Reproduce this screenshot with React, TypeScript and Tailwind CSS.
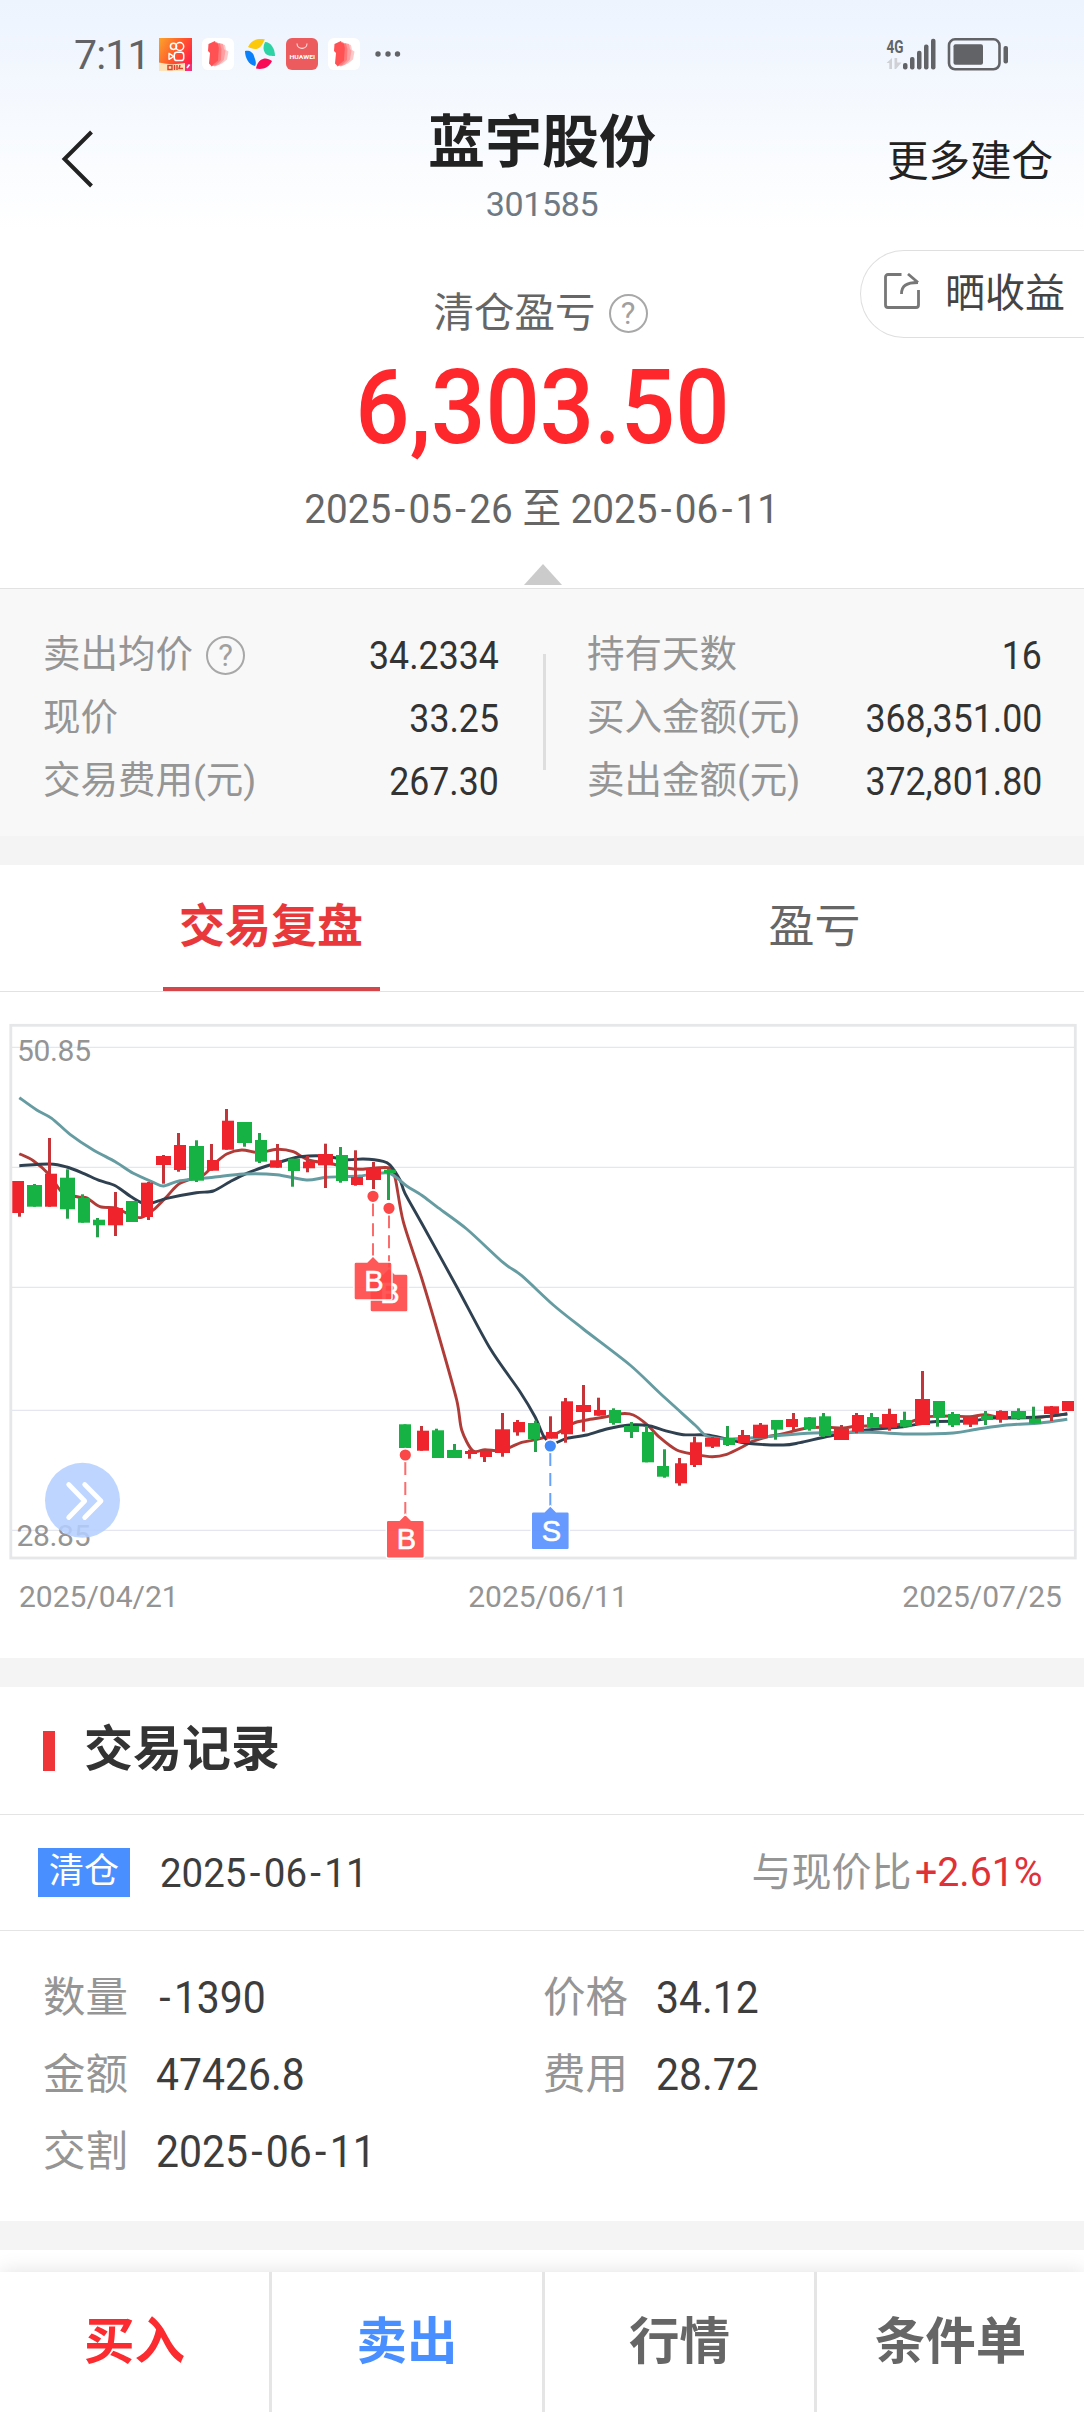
import { Fragment, JSX, ReactNode } from 'react'

type Point = [number, number]

// bodyX, bodyWidth, bodyTop, bodyBottom, wickX, high, low, rising (1) / falling (0)
type Candle = [number, number, number, number, number, number, number, 0 | 1]

const candles: Candle[] = [
  [12.3, 11.7, 181, 213, 19.5, 181, 216.7, 1],
  [27, 15, 185, 206.7, 34.5, 184, 206.7, 0],
  [45, 12, 173.7, 206.7, 49.5, 138, 206.7, 1],
  [60, 15, 177.7, 209.3, 67.5, 169.3, 218.7, 0],
  [78, 12, 198, 222.7, 82.5, 194.3, 222.7, 0],
  [93, 12, 219.7, 225.3, 97.5, 218, 237.3, 0],
  [108, 15, 208, 225.3, 115.5, 192, 236, 1],
  [126, 12, 201, 222, 130.5, 201, 222, 0],
  [141, 12, 182.7, 217, 148.5, 182, 220, 1],
  [156, 15, 156, 165, 163.5, 155, 183.7, 1],
  [174, 12, 145, 170, 178.5, 133, 171.7, 1],
  [189, 15, 146, 180.7, 196.5, 140.3, 182, 0],
  [207, 12, 160, 170.7, 211.5, 144, 170.7, 1],
  [222, 12, 120.7, 149.7, 226.5, 109, 149.7, 1],
  [237, 15, 122, 143, 244.5, 122, 146.7, 0],
  [255, 12, 140, 161.7, 259.5, 133, 163, 0],
  [270, 12, 160.3, 167.7, 277.5, 144, 167.7, 1],
  [288, 12, 158.7, 171, 292.5, 158.7, 186.7, 0],
  [303, 12, 161.7, 168.3, 307.5, 156, 172.3, 1],
  [318, 15, 154, 165.3, 325.5, 143.7, 188, 1],
  [336, 12, 155, 181, 340.5, 147, 182.7, 0],
  [351, 12, 177, 185, 355.5, 150.3, 185.7, 1],
  [366, 15, 168.3, 180, 373.5, 162, 189, 1],
  [384, 12, 169.7, 173, 388.5, 169, 200, 0],
  [399, 12, 424.3, 448, 405, 424.3, 448, 0],
  [417, 12, 430.7, 450.7, 421.5, 426, 450.7, 1],
  [432, 12, 430.3, 458, 436.5, 428.7, 458, 0],
  [447, 15, 450, 458, 454.5, 444, 458, 0],
  [465, 12, 451, 454, 469.5, 449.7, 458.7, 1],
  [480, 12, 451, 457, 484.5, 451, 462, 1],
  [495, 15, 429.3, 453, 502.5, 413, 456.7, 1],
  [513, 12, 422, 432.3, 517.5, 420, 435.7, 1],
  [528, 12, 423, 439, 535.5, 420.7, 452, 0],
  [546, 12, 432, 438.7, 550.5, 416.3, 438.7, 1],
  [561, 12, 401.3, 434.3, 565.5, 398, 442.7, 1],
  [576, 15, 405, 412, 583.5, 385, 431.7, 1],
  [594, 12, 410, 415.7, 598.5, 397.7, 415.7, 1],
  [609, 12, 410, 423, 613.5, 408.3, 424.7, 0],
  [624, 15, 426, 432, 631.5, 422, 438, 0],
  [642, 12, 432, 462.3, 646.5, 426, 462.3, 0],
  [657, 12, 466, 476.7, 664.5, 449.3, 477.7, 0],
  [675, 12, 463.3, 483.3, 679.5, 458, 485.7, 1],
  [690, 12, 442.3, 465, 694.5, 436.7, 467, 1],
  [705, 15, 437.7, 446.7, 712.5, 437, 448, 1],
  [723, 12, 438, 445, 727.5, 426, 446, 0],
  [738, 12, 435, 443, 742.5, 430, 443, 1],
  [753, 15, 424.7, 438, 760.5, 423, 438, 1],
  [771, 12, 420, 429.7, 775.5, 420, 439.7, 0],
  [786, 12, 419, 427, 793.5, 413, 430, 1],
  [804, 12, 417.3, 429, 809.5, 417, 430.7, 0],
  [819, 12, 416.3, 436, 823.5, 413, 437, 0],
  [834, 15, 429, 440, 841.5, 425, 440, 1],
  [852, 12, 415, 431.7, 856.5, 413, 433.3, 1],
  [867, 12, 417, 427.7, 871.5, 413, 427.7, 0],
  [882, 15, 414, 427.7, 889.5, 408.7, 430.7, 1],
  [900, 12, 420, 426.7, 904.5, 411.7, 427.7, 0],
  [915, 15, 399, 425, 922.5, 371, 425, 1],
  [933, 12, 401, 417.7, 937.5, 401, 426.7, 0],
  [948, 12, 414, 425.3, 952.5, 412, 427, 0],
  [963, 15, 417, 424.7, 970.5, 417, 427, 1],
  [981, 12, 415.7, 420, 985.5, 411, 425, 0],
  [996, 12, 411, 419.7, 1000.5, 410.3, 422.7, 1],
  [1011, 15, 411, 418.7, 1018.5, 408.3, 420, 0],
  [1029, 12, 418.7, 423.7, 1033.5, 406.7, 423.7, 0],
  [1044, 15, 406.3, 414, 1051.5, 406, 421, 1],
  [1062, 12, 401, 411, 1068, 401, 411, 1],
]

const ma5: Point[] = [
  [19.3, 153.7], [33.3, 160.7], [49.7, 175], [61.7, 191.7], [78.3, 197], [86.7, 197.7], [100, 206.7],
  [116.7, 208.3], [132, 216], [141.7, 217.3], [153.3, 210], [166.7, 196.7], [180, 183.3], [203.3, 175],
  [215, 163.3], [226.7, 154], [241.7, 150], [259.7, 152.7], [276.7, 149.3], [293.3, 151.7], [308.3, 160],
  [333, 164], [348, 168.3], [361.7, 169.3], [388.3, 167.7], [395, 177.3], [403.3, 221.7], [421.7, 278.3],
  [440, 340], [456.7, 400], [461.7, 430], [472.7, 450.7], [485, 449.7], [500, 450.7], [510, 447.3],
  [521.7, 442.3], [535.3, 439.7], [556.7, 433.3], [573.3, 423.3], [586.7, 420], [603.3, 417.3],
  [621.7, 413.7], [633.3, 415], [646.7, 424.3], [660, 437.7], [676.7, 450], [694.7, 454.3], [712.3, 456.7],
  [726.7, 454.3], [742.7, 446.7], [751.7, 441.7], [766.7, 437], [783.3, 433.7], [806.7, 428], [826.7, 427.3],
  [843.3, 428], [856.7, 426], [873.3, 426], [903.3, 424], [923.3, 417.3], [936.7, 416.3], [953.3, 416],
  [970, 416.7], [985, 414.7], [1003.3, 417.7], [1040, 417.3], [1067.3, 414],
]

const ma10: Point[] = [
  [19.3, 165.7], [50, 164], [66.7, 167], [83.3, 173.3], [100, 180.7], [115.3, 185.7], [132, 197.3],
  [146.7, 204], [166.7, 198.3], [196.3, 192.7], [213.3, 191], [230, 181.7], [246.7, 173.3], [266.7, 166],
  [286.7, 160], [300, 156.7], [323.3, 156], [346.7, 159.7], [363.3, 159], [383.3, 161.3], [390, 165],
  [400, 180], [405, 193.3], [421.7, 223.3], [456.7, 286.7], [490, 348.3], [520, 391.7], [535, 416.7],
  [544, 436.7], [553.3, 443.3], [566.7, 438.3], [586.7, 435], [606.7, 429], [630, 425], [650, 426],
  [665, 430.7], [683.3, 434.7], [706.7, 435], [727.7, 439.3], [746.7, 443.3], [783.3, 445], [800, 442.7],
  [830, 436], [866.7, 430], [903.3, 426.7], [933.3, 421.7], [970, 421], [993.3, 418], [1040, 417],
  [1067.3, 413.7],
]

const ma20: Point[] = [
  [19.3, 97.7], [36.7, 110], [51.7, 118.3], [70, 134.3], [93.3, 150], [115.3, 161.7], [133.3, 173.3],
  [153.3, 182.3], [163.7, 186], [180, 180.7], [213.3, 177.3], [243.3, 174], [276.7, 174.7], [306.7, 180],
  [326.7, 177.3], [360, 176], [388.3, 173], [406.7, 186], [421.7, 195.3], [436.7, 206.7], [466.7, 229],
  [503.3, 262.7], [521.7, 275.7], [553.3, 305], [583.3, 329], [630, 365], [660, 393.3], [695, 425],
  [706.7, 436], [726.7, 439], [750, 438], [773.3, 436], [813.3, 433], [870, 432.3], [906.7, 434],
  [953.3, 433], [976.7, 429.3], [1006.7, 425], [1040, 423], [1067.3, 419.3],
]

const gridLines = [47.3, 167.3, 287.3, 410.3, 530.3]

// Catmull-Rom through the points, softened a little
function smooth(points: Point[]): string {
  let d = `M${points[0][0]} ${points[0][1]}`
  for (let i = 0; i < points.length - 1; i++) {
    const p0 = points[i - 1] ?? points[i]
    const p1 = points[i]
    const p2 = points[i + 1]
    const p3 = points[i + 2] ?? p2
    d += ` C${p1[0] + (p2[0] - p0[0]) / 7} ${p1[1] + (p2[1] - p0[1]) / 7} ${p2[0] - (p3[0] - p1[0]) / 7} ${p2[1] - (p3[1] - p1[1]) / 7} ${p2[0]} ${p2[1]}`
  }
  return d
}

interface MarkerProps {
  x: number
  y: number
  badgeTop: number
  label: 'B' | 'S'
}

function Marker({ x, y, badgeTop, label }: MarkerProps) {
  const fill = label === 'B' ? '#ff4646' : '#568fff'
  const dot = label === 'B' ? '#fb4747' : '#4289fa'
  return (
    <g>
      <line x1={x} y1={y + 7} x2={x} y2={badgeTop - 4} stroke={dot} strokeOpacity={0.8} strokeWidth={2} strokeDasharray="13 7" />
      <circle cx={x} cy={y} r={6.4} fill={dot} stroke="#fff" strokeWidth={1.6} />
      <path
        d={`M${x - 17} ${badgeTop}h11l6 -6l6 6h11q2 0 2 2v34q0 2 -2 2h-34q-2 0 -2 -2v-34q0 -2 2 -2z`}
        fill={fill}
        fillOpacity={0.9}
        stroke="#fff"
        strokeWidth={1.4}
      />
      <text x={x + 1} y={badgeTop + 29} textAnchor="middle" fontSize={29} fill="#fff" stroke="#fff" strokeWidth={0.6} className="font-['Liberation_Sans',sans-serif]">
        {label}
      </text>
    </g>
  )
}

function KLineChart() {
  return (
    <svg className="block w-full h-[544px]" viewBox="0 20 1084 544" fill="none">
      {gridLines.map(y => (
        <line key={y} x1={12} x2={1074} y1={y} y2={y} stroke="#e4e7ef" strokeWidth={1.3} />
      ))}
      <rect x={10.8} y={25.3} width={1064.5} height={532.7} stroke="#e6e7e9" strokeWidth={2.8} />
      <path d={smooth(ma5)} stroke="#b03c38" strokeWidth={2.9} />
      <path d={smooth(ma10)} stroke="#2f4150" strokeWidth={2.9} />
      <path d={smooth(ma20)} stroke="#659ca2" strokeWidth={2.9} />
      {candles.map(([x, w, top, bottom, wick, high, low, up]) => (
        <g key={x}>
          <rect x={wick - 1.5} y={high} width={3} height={low - high} fill={up ? '#c4353a' : '#27a04b'} />
          <rect x={x} y={top} width={w} height={bottom - top} fill={up ? '#ee232b' : '#17b244'} />
        </g>
      ))}
      <g fontSize={30} fill="#949494">
        <text x={17} y={60.7} textLength={74}>50.85</text>
        <text x={16.5} y={545.7} textLength={74}>28.85</text>
      </g>
      <Marker x={389} y={208.3} badgeTop={274} label="B" />
      <Marker x={373} y={196.3} badgeTop={262} label="B" />
      <Marker x={405.3} y={455} badgeTop={520.3} label="B" />
      <Marker x={550.3} y={446} badgeTop={511.7} label="S" />
      <circle cx={82.5} cy={500.3} r={37.5} fill="#b3cfff" fillOpacity={0.87} />
      <path d="M68.7 484.5L84.7 501L68.7 517.5M84.7 484.5L101 501L84.7 517.5" stroke="#fff" strokeWidth={4.8} strokeLinecap="round" strokeLinejoin="round" />
    </svg>
  )
}

function CardsIcon() {
  return (
    <svg className="w-8 h-8" viewBox="0 0 32 32">
      <rect width={32} height={32} rx={6} fill="#fff" />
      <path d="M19 6l4 1 1 5 2.500 1.500-1.500 8-5 4-7 3z" fill="#ffc9ca" />
      <path d="M17 5l4 1 1 5 1.500 1.500-1.500 9-5 5-5 2z" fill="#ff9fa1" />
      <path d="M14 4l4 2 1.500 5-.5 11-5 5-5 1.500z" fill="#ff797b" />
      <path d="M6.500 6L13 3l1 2 2 1 .8 4-.8 12.500L9.500 28 7 25.500 8 15 6 13z" fill="#ff5054" />
    </svg>
  )
}

function StatusBar() {
  return (
    <div className="h-[108px] pl-[74px] pr-[75px] flex items-center text-[#626367]">
      <span className="w-[85px] pt-[2px] text-[41px] leading-none tracking-[-0.8px]">7:11</span>
      <div className="flex items-center gap-[10px]">
        <svg className="w-[33px] h-[33px]" viewBox="0 0 33 33" fill="none">
          <defs>
            <linearGradient id="kuai" x1="0" y1="0" x2="1" y2="0.6">
              <stop offset="0" stopColor="#fba52c" />
              <stop offset="0.55" stopColor="#ff5a2a" />
              <stop offset="1" stopColor="#ff2348" />
            </linearGradient>
          </defs>
          <rect width={33} height={33} fill="url(#kuai)" />
          <circle cx={14.5} cy={8.3} r={3.1} stroke="#fff" strokeWidth={1.5} />
          <circle cx={20.8} cy={8.5} r={3.9} stroke="#fff" strokeWidth={1.5} />
          <rect x={15.3} y={14.3} width={9.4} height={8.2} rx={2.6} stroke="#fff" strokeWidth={1.5} />
          <path d="M14.800 18.300L10 15.300v6z" stroke="#fff" strokeWidth={1.4} strokeLinejoin="round" />
          <path d="M0 24.500q13 3 26 0.500v8H0z" fill="#ffe3b8" />
          <path d="M9 27.500h4v4H9zM15.500 27v5M18 27v5M21 27l-1 3.500h4" stroke="#e0412c" strokeWidth={1.5} />
          <path d="M26 26h7v7h-7z" fill="#f4307a" />
          <path d="M30.500 26.500L28 30" stroke="#fff" strokeWidth={1.6} />
        </svg>
        <CardsIcon />
        <svg className="w-8 h-8" viewBox="0 0 32 32">
          <path d="M4 9C7 2 14 0 21 1.500C19 4 18 9 14 10.500C10 12 7 10 4 9z" fill="#fdc90d" />
          <path d="M21 4C27 4 31 11 31 18C28 18 23 18 21 15C19 12 19 8 21 4z" fill="#2dd3a5" />
          <path d="M28 23C25 30 18 32 12 30.500C13 26 15 22 19 21C22 20 25 21 28 23z" fill="#f80a56" />
          <path d="M1 13C5 12 9 14 10 18C11 21 13 25 11 28C5 27 1 20 1 13z" fill="#0a80fb" />
        </svg>
        <svg className="w-8 h-8" viewBox="0 0 32 32" fill="none">
          <rect width={32} height={32} rx={6} fill="#ec5c5e" />
          <path d="M11 5.500c0 6.500 10 6.500 10 0" stroke="#fff" strokeOpacity={0.8} strokeWidth={1.1} />
          <text x={3.5} y={21} fontSize={6} fontWeight={700} fill="#fff" textLength={25.5} lengthAdjust="spacingAndGlyphs">HUAWEI</text>
        </svg>
        <CardsIcon />
      </div>
      <svg className="w-[26px] h-[6px] ml-[15px]" viewBox="0 0 26 6" fill="currentColor">
        <circle cx={3} cy={3} r={2.7} />
        <circle cx={13} cy={3} r={2.7} />
        <circle cx={22.5} cy={3} r={2.7} />
      </svg>
      <svg className="w-[123px] h-[34px] ml-auto overflow-visible" viewBox="0 0 123 34" fill="currentColor">
        <text x={0.5} y={15.5} fontSize={18.5} fontWeight={700} textLength={17} lengthAdjust="spacingAndGlyphs">4G</text>
        <path d="M0.500 26l5.500-5v11H3.300v-6zM8.500 21h2.700v4.500h4.300L10 32H8.500z" fill="#cfd1d5" />
        <rect x={17} y={26} width={4.5} height={6.5} rx={2} />
        <rect x={24} y={20} width={4.5} height={12.5} rx={2} />
        <rect x={31} y={13.8} width={4.5} height={18.7} rx={2} />
        <rect x={38} y={7.5} width={4.5} height={25} rx={2} />
        <rect x={45} y={1.8} width={4.5} height={30.7} rx={2} />
        <rect x={63} y={2.3} width={50.5} height={30} rx={6} fill="none" stroke="currentColor" strokeWidth={2.6} />
        <rect x={67.5} y={7.3} width={29.5} height={20.5} rx={2} />
        <rect x={117.5} y={9} width={4.5} height={17.5} rx={2} />
      </svg>
    </div>
  )
}

function HelpIcon() {
  return (
    <span className="w-[39px] h-[39px] shrink-0 rounded-full border-2 border-[#a8a8a8] text-[#a0a0a0] text-[31px] leading-none flex items-center justify-center">
      ?
    </span>
  )
}

// Numbers and dates with a wider hyphen than the font's own
function Digits({ children }: { children: string }) {
  return (
    <>
      {children.split('-').map((part, i) => (
        <Fragment key={i}>
          {i > 0 && <span className="inline-block px-[3.5px]">-</span>}
          {part}
        </Fragment>
      ))}
    </>
  )
}

function StatRow({ label, value, help }: { label: string; value: string; help?: boolean }) {
  return (
    <div className="h-[63px] flex items-center justify-between">
      <div className="flex items-center gap-[13px] text-[37.5px] text-[#959595]">
        <span className="pb-[2px]">{label}</span>
        {help && <HelpIcon />}
      </div>
      <span className="pt-px text-[39px] text-[#333] origin-right scale-x-[0.915]">{value}</span>
    </div>
  )
}

function RecordField({ label, value }: { label: string; value: string }) {
  return (
    <div className="h-[77px] flex items-center">
      <span className="w-[113px] pt-[2px] text-[42.5px] text-[#959595]">{label}</span>
      <span className="pt-[3px] text-[43.5px] text-[#3d3d3d] origin-left scale-x-[0.94]">
        <Digits>{value}</Digits>
      </span>
    </div>
  )
}

function BottomButton({ className, children }: { className: string; children: ReactNode }) {
  return <button className={`text-[50.5px] font-bold ${className}`}>{children}</button>
}

export default function App(): JSX.Element {
  return (
    <div className="w-[1084px] h-[2412px] overflow-hidden flex flex-col bg-white leading-none font-['Roboto','Noto_Sans_CJK_SC',sans-serif]">
      {/* Header */}
      <header className="h-[230px] shrink-0 bg-linear-to-b from-[#edf4fe] to-white">
        <StatusBar />
        <div className="grid grid-cols-3 items-start text-[#222]">
          <svg className="w-8 h-[58px] ml-[61px] mt-[22px]" viewBox="0 0 32 58" fill="none">
            <path d="M30.500 2L3.500 29L30.500 56" stroke="currentColor" strokeWidth={4} />
          </svg>
          <div className="flex flex-col items-center pt-[6px]">
            <h1 className="text-[57px] font-bold">蓝宇股份</h1>
            <span className="mt-[16px] text-[34px] tracking-[-0.4px] text-[#6f7983]">301585</span>
          </div>
          <span className="mt-[33px] mr-[31px] text-right text-[41.5px]">更多建仓</span>
        </div>
      </header>

      {/* Profit summary */}
      <section className="relative h-[358px] shrink-0 flex flex-col items-center">
        <button className="absolute right-0 top-[20px] w-[224px] h-[88px] pl-[23px] flex items-center rounded-l-full border border-r-0 border-[#dfdfdf] text-[40px] text-[#444]">
          <svg className="w-9 h-9 mr-[25px] mb-[6px] text-[#777]" viewBox="0 0 36 36" fill="none" stroke="currentColor" strokeWidth={2.8}>
            <path d="M17.500 1.500H4A2.500 2.500 0 0 0 1.500 4V32A2.500 2.500 0 0 0 4 34.500H32A2.500 2.500 0 0 0 34.500 32V17" />
            <path d="M17.500 21C17.500 13 22 9.500 34 9.500M24 1L34 9.500" />
          </svg>
          晒收益
        </button>
        <div className="mt-[63px] mr-[3px] h-[40px] flex items-center gap-[13px] text-[40.5px] text-[#666]">
          清仓盈亏
          <HelpIcon />
        </div>
        <div className="mt-[23px] text-[104px] font-medium text-[#fe272c] scale-x-[0.92]">6,303.50</div>
        <div className="mt-[29px] text-[41px] text-[#666] scale-x-[0.943]">
          <Digits>2025-05-26 至 2025-06-11</Digits>
        </div>
        <svg className="w-[38px] h-[21px] mt-auto mb-[3px] ml-[2px]" viewBox="0 0 38 21">
          <path d="M19 0L38 21H0z" fill="#cbcbcb" />
        </svg>
      </section>

      {/* Position stats */}
      <section className="h-[248px] shrink-0 flex border-t border-[#e2e2e2] bg-[#f8f8f8] pt-[35px] pl-[43px] pr-[42px]">
        <div className="w-[456px]">
          <StatRow label="卖出均价" value="34.2334" help />
          <StatRow label="现价" value="33.25" />
          <StatRow label="交易费用(元)" value="267.30" />
        </div>
        <div className="w-[3px] h-[116px] ml-[44px] mr-[41px] mt-[30px] bg-[#dedede]" />
        <div className="flex-1">
          <StatRow label="持有天数" value="16" />
          <StatRow label="买入金额(元)" value="368,351.00" />
          <StatRow label="卖出金额(元)" value="372,801.80" />
        </div>
      </section>
      <div className="h-[29px] shrink-0 bg-[#f4f4f4]" />

      {/* Tabs */}
      <nav className="h-[127px] shrink-0 grid grid-cols-2 border-b border-[#e2e2e2] text-[46px]">
        <div className="flex justify-center">
          <span className="w-[217px] h-[126px] pt-[38px] text-center font-bold text-[#e9383c] border-b-4 border-[#d4464a]">交易复盘</span>
        </div>
        <div className="pt-[38px] pl-[3px] text-center text-[#666]">盈亏</div>
      </nav>

      {/* Chart */}
      <section className="h-[666px] shrink-0 pt-[28px]">
        <KLineChart />
        <div className="mt-[18px] pl-[19px] pr-[22px] flex justify-between text-[30px] text-[#949494]">
          <span>2025/04/21</span>
          <span className="pl-[15px]">2025/06/11</span>
          <span>2025/07/25</span>
        </div>
      </section>
      <div className="h-[29px] shrink-0 bg-[#f4f4f4]" />

      {/* Trade records */}
      <section className="h-[534px] shrink-0">
        <div className="h-[128px] px-[43px] flex items-center gap-[29px] border-b border-[#e4e4e4]">
          <span className="w-3 h-[40px] bg-[#f03538]" />
          <h2 className="pb-[2px] text-[49px] font-bold text-[#333]">交易记录</h2>
        </div>
        <div className="h-[116px] pl-[38px] pr-[41px] flex items-center border-b border-[#e4e4e4]">
          <span className="w-[92px] h-[49px] pt-[6px] text-center text-[35px] bg-[#4a8fff] text-white">清仓</span>
          <span className="ml-[30px] pt-[2px] text-[40.5px] text-[#3d3d3d] origin-left scale-x-[0.95]">
            <Digits>2025-06-11</Digits>
          </span>
          <span className="ml-auto text-[40px] text-[#959595]">与现价比</span>
          <span className="text-[40.5px] text-[#df3238] origin-right scale-x-[0.97]">+2.61%</span>
        </div>
        <div className="grid grid-cols-[500px_1fr] pl-[43px] pt-[28px]">
          <RecordField label="数量" value="-1390" />
          <RecordField label="价格" value="34.12" />
          <RecordField label="金额" value="47426.8" />
          <RecordField label="费用" value="28.72" />
          <RecordField label="交割" value="2025-06-11" />
        </div>
      </section>
      <div className="h-[29px] shrink-0 bg-[#f4f4f4]" />

      {/* Actions */}
      <footer className="mt-[22px] h-[140px] shrink-0 grid grid-cols-[272px_273px_272px_1fr] divide-x-3 divide-[#e5e5e5] bg-white shadow-[0_0_20px_rgba(0,0,0,0.12)]">
        <BottomButton className="text-[#fb2b2f]">买入</BottomButton>
        <BottomButton className="text-[#4a8fff]">卖出</BottomButton>
        <BottomButton className="text-[#666]">行情</BottomButton>
        <BottomButton className="text-[#666]">条件单</BottomButton>
      </footer>
    </div>
  )
}
